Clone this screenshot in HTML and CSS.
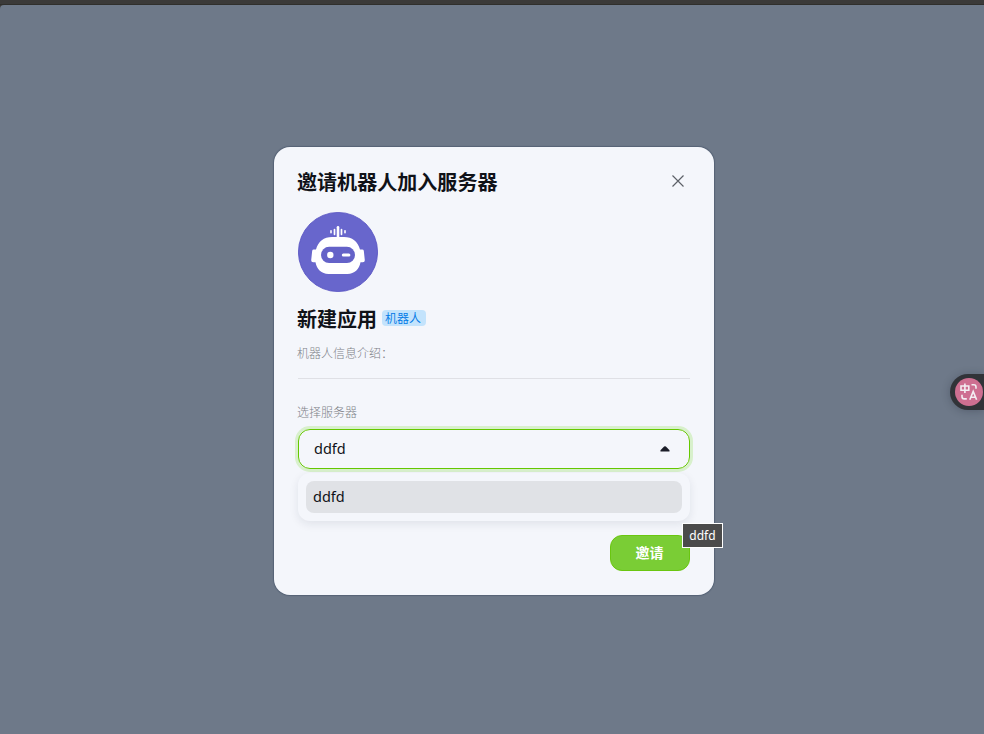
FILE: index.html
```html
<!DOCTYPE html>
<html lang="zh-CN">
<head>
<meta charset="utf-8">
<title>邀请机器人加入服务器</title>
<link rel="stylesheet" href="styles.css">
</head>
<body>
<div class="topbar"></div>
<main class="backdrop">
  <section class="modal">
    <header class="modal-header">
      <h1 class="title">邀请机器人加入服务器</h1>
      <button class="close" aria-label="关闭">
        <svg width="12" height="12" viewBox="0 0 12 12"><path d="M.5.5 11.500 11.500M11.500.5.5 11.500" fill="none" stroke="#5c6067" stroke-width="1.150"/></svg>
      </button>
    </header>
    <svg class="avatar" width="80" height="80" viewBox="0 0 80 80">
      <circle cx="40" cy="40" r="39.600" fill="#6866cc" stroke="#5551c2" stroke-width=".8"/>
      <g stroke="#fff" stroke-linecap="round" fill="none">
        <path d="M40 15.200V27" stroke-width="2.600"/>
        <path d="M36.500 17.500v4.800M43.500 17.500v4.800" stroke-width="1.700"/>
        <path d="M33 18.800v2M47 18.800v2" stroke-width="1.600"/>
      </g>
      <path d="M34 25h12c8 0 14 4.500 16 12.500h2.300q1.200 0 1.500 1.300l1 9.200q.2 2.300-2 2.300h-2.300c-1.200 7-6 11.700-13 11.700h-19c-7 0-11.800-4.700-13-11.700h-2.300q-2.200 0-2-2.300l1-9.200q.3-1.300 1.500-1.300H18C20 29.500 26 25 34 25z" fill="#fff"/>
      <rect x="23" y="34.800" width="34" height="16.200" rx="8.100" fill="#6462c8"/>
      <circle cx="32.300" cy="43" r="3.200" fill="#fff"/>
      <rect x="43.800" y="41.500" width="8.600" height="3" rx="1.500" fill="#fff"/>
    </svg>
    <div class="name-row">
      <h2 class="name">新建应用</h2>
      <span class="tag">机器人</span>
    </div>
    <p class="intro">机器人信息介绍：</p>
    <label class="label">选择服务器</label>
    <div class="select-wrap">
      <div class="select">
        <span class="value">ddfd</span>
        <svg width="10" height="6" viewBox="0 0 10 6"><path d="M4.100.6Q5-.2 5.900.6L9.300 4.100Q10.100 5.600 8.800 5.600H1.200Q-.1 5.600.7 4.100z" fill="#1b1d28"/></svg>
      </div>
      <div class="dropdown"><div class="option">ddfd</div></div>
    </div>
    <footer class="actions">
      <button class="invite">邀请</button>
    </footer>
  </section>
</main>
<div class="tooltip">ddfd</div>
<div class="translate">
  <svg width="28" height="28" viewBox="0 0 28 28">
    <circle cx="14" cy="14" r="14" fill="#ce6f91"/>
    <g fill="none" stroke="#f3eef2" stroke-width="1.600">
      <path d="M6 8h7.800v4.200H6zM9.900 5.500v9.500"/>
      <path d="M16.500 6.800h2.300q2.200 0 2.200 2.200v1.800M7 16.700v2q0 2.200 2.200 2.200h2.600"/>
      <path d="M14.800 21.800 18.200 13.400 21.600 21.800M16 19.200h4.400"/>
    </g>
  </svg>
</div>
</body>
</html>
```
FILE: styles.css
```css
* { box-sizing: border-box; }
body {
  margin: 0;
  height: 734px;
  overflow: hidden;
  background: #3a3938;
  font-family: "Noto Sans", "Noto Sans CJK SC", sans-serif;
  color: #101218;
}
h1, h2, p { margin: 0; }
button { border: 0; padding: 0; font-family: inherit; }
.topbar { height: 5px; background: #3b3a39; border-bottom: 1px solid #302f2c; }
.backdrop {
  height: 729px;
  padding-top: 142px;
  padding-left: 274px;
  background: #6e7989;
  border-top-left-radius: 4px;
}
.modal {
  width: 440px;
  height: 448px;
  padding: 20px 24px 24px;
  border-radius: 16px;
  background: #f4f6fb;
  box-shadow: 0 0 1px 1px rgba(50, 65, 90, .4);
}
.modal-header { display: flex; justify-content: space-between; height: 45px; }
.title, .name {
  font: 700 20px/30px "Noto Sans CJK SC", sans-serif;
  margin-left: -1px;
}
.title { letter-spacing: .05px; }
.close {
  width: 12px;
  height: 12px;
  margin: 7.500px 6.500px 0 0;
  background: none;
}
.close svg, .avatar { display: block; }
.name-row { display: flex; gap: 5px; height: 46px; padding-top: 12px; }
.tag {
  width: 44px;
  height: 16px;
  padding-left: 3px;
  margin-top: 6px;
  border-radius: 4px;
  background: #c3e3fc;
  color: #0078e6;
  font: 350 12px/16px "Noto Sans CJK SC", sans-serif;
}
.intro {
  height: 41px;
  padding-top: 6px;
  border-bottom: 1px solid #dfe0e5;
  text-indent: -1px;
  color: #7e8288;
  font: 300 12px/18px "Noto Sans CJK SC", sans-serif;
}
.label {
  display: block;
  height: 50px;
  padding-top: 24px;
  margin-left: -1px;
  color: #7e8288;
  font: 300 12px/18px "Noto Sans CJK SC", sans-serif;
}
.select-wrap { position: relative; font-size: 14.500px; }
.select {
  display: flex;
  align-items: center;
  justify-content: space-between;
  height: 40px;
  padding: 0 19px 0 15px;
  border: 1px solid #65c800;
  border-radius: 12px;
  box-shadow: 0 0 0 3px #d8f0cc;
}
.value { padding-bottom: 2px; }
.dropdown {
  position: absolute;
  top: 44px;
  left: 0;
  right: 0;
  height: 48px;
  padding: 8px;
  border-radius: 12px;
  background: #f4f6fb;
  box-shadow: 0 3px 10px rgba(20, 30, 50, .09);
}
.option {
  height: 32px;
  padding-left: 7px;
  border-radius: 8px;
  background: #e0e2e6;
  line-height: 31px;
}
.actions { display: flex; justify-content: flex-end; padding-top: 66px; }
.invite {
  width: 80px;
  height: 36px;
  padding: 0 1px 2px 0;
  border: 1px solid #6ac610;
  border-radius: 12px;
  background: #7acd35;
  color: #fff;
  font: 700 14px/32px "Noto Sans CJK SC", sans-serif;
}
.tooltip {
  position: absolute;
  left: 682px;
  top: 523px;
  width: 41px;
  height: 25px;
  border: 1px solid #fff;
  background: #4b4b4b;
  color: #fff;
  font-size: 12px;
  line-height: 23px;
  text-align: center;
}
.translate {
  position: absolute;
  left: 950px;
  top: 374px;
  width: 34px;
  height: 36px;
  padding: 4px 0 0 5px;
  border-radius: 18px 0 0 18px;
  background: #313338;
  box-shadow: 0 1px 8px rgba(30, 38, 50, .3);
}
```
